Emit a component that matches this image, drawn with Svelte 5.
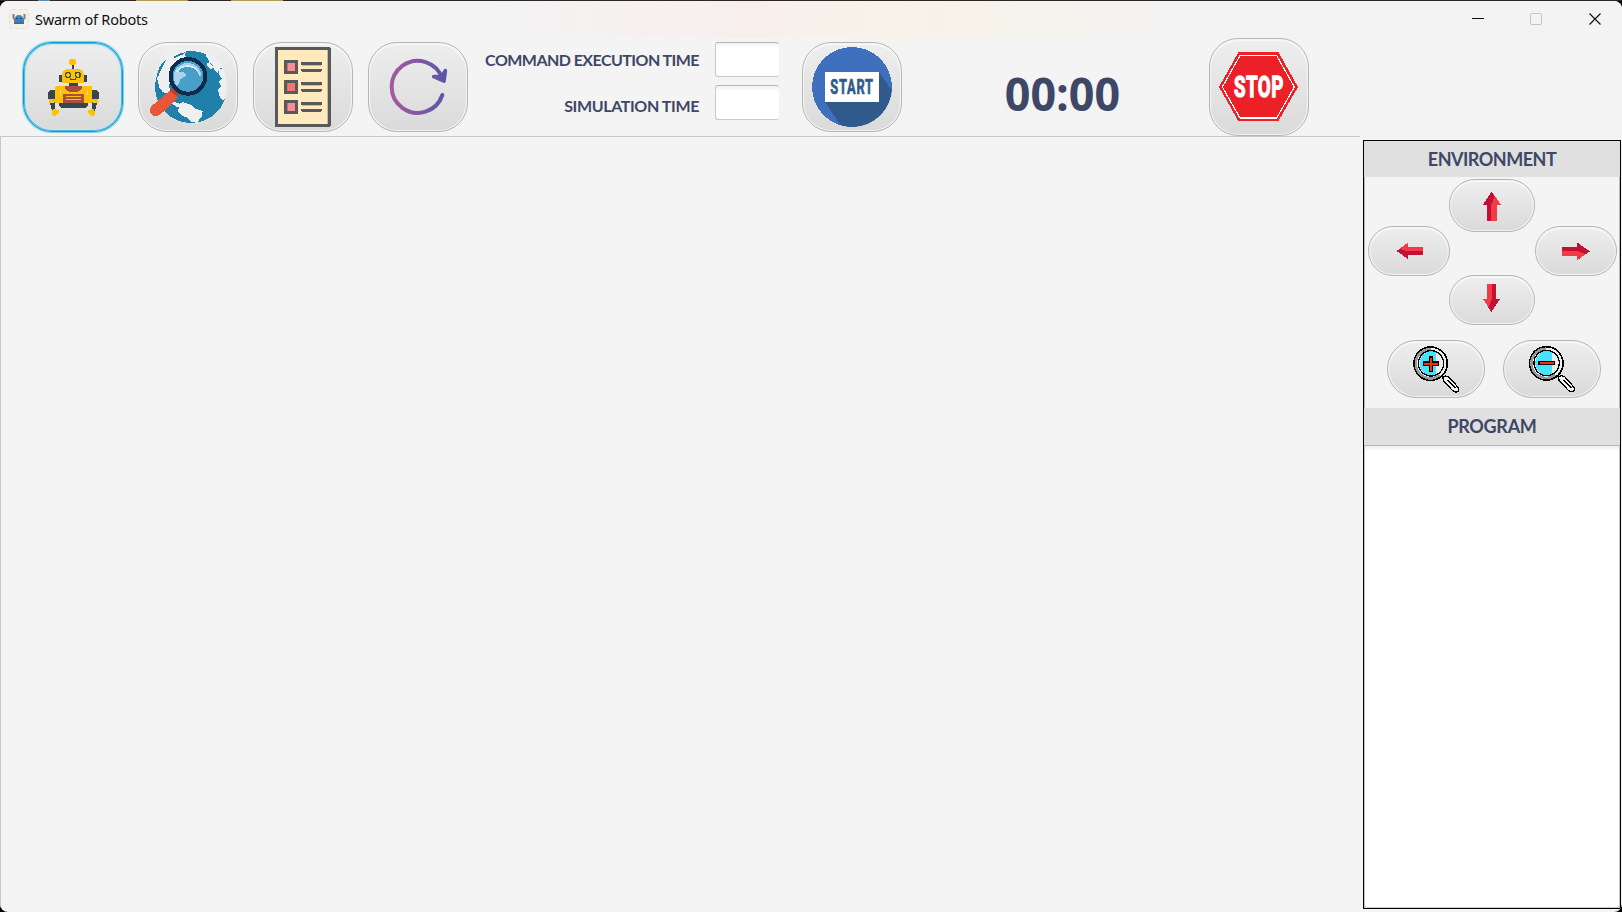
<script>
  let commandTime = $state('');
  let simulationTime = $state('');
  let clock = $state('00:00');
  const rows = [93, 153, 213];
</script>

<div class="desktop">
  <div class="strip"><i style="width:12px"></i><b></b><b></b></div>
  <main class="window">
    <header class="titlebar">
      <svg class="appicon" viewBox="0 0 20 20" width="20" height="20">
        <rect x=".5" y=".5" width="19" height="19" rx="3" fill="#f4efe7" stroke="#e5dfd7" stroke-dasharray="4 2" />
        <path d="M4.500 5v4l2 2M15.500 5v4l-2 2" fill="none" stroke="#8a7d7b" stroke-width="2" />
        <path d="M6 14V10q0-4 4-4t4 4v4z" fill="#3987c9" />
        <path d="M5 11h10v3H5z" fill="#3f78b5" />
        <path d="M7 9h2v1H7zm4 0h2v1h-2z" fill="#263858" />
        <path d="M5 14.500h10" stroke="#8f4b50" />
      </svg>
      <span class="title">Swarm of Robots</span>
      <div class="controls">
        <svg width="130" height="14" viewBox="0 0 130 14">
          <path d="M0 6.500h12" stroke="#111" />
          <rect x="58.500" y="1.500" width="11" height="11" rx="1" fill="none" stroke="#c4c4c4" />
          <path d="M117.500 1.500l11 11m0-11l-11 11" stroke="#111" stroke-width="1.200" />
        </svg>
      </div>
    </header>

    <div class="toolbar">
      <button class="tool focused" aria-label="Robots">
        <svg viewBox="24 18 300 270" shape-rendering="crispEdges">
          <circle cx="173" cy="78" r="10.500" fill="#ffc107" />
          <path d="M171 88h6v12h-6zM132 117h9v21h-9zM207 117h9v21h-9zM162 140h27v11h-27z" fill="#37474f" />
          <path d="M141 141v-21q0-21 21-21h24q21 0 21 21v21z" fill="#ffc107" />
          <g fill="none" stroke="#455044" stroke-width="4"><circle cx="159" cy="117" r="7.500" /><circle cx="188" cy="117" r="7.500" /></g>
          <path d="M165 126h3v3h12v-3h3v6h-18z" fill="#455044" />
          <path d="M99 189v-18q2-9 12-9h9v27zM252 189v-18q-2-9-12-9h-9v27zM105 201l15-2v22l-9 5zM246 201l-15-2v22l9 5zM132 201h87v8l-6 7h-75l-6-7z" fill="#37474f" />
          <path d="M120 201v-45q0-6 6-6h99q6 0 6 6v45z" fill="#ffc107" />
          <path d="M135 162v15M216 162v15" stroke="#ffe082" stroke-width="3" />
          <path d="M150 150h51v6q-4 11-16 11h-20q-12 0-15-11zM144 174h63v27h-63z" fill="#a6513b" />
          <path d="M153 182h45M153 191h45" stroke="#ffc107" stroke-width="3" />
          <path d="M102 189h18v9l-18 3zM231 189h18v12l-18-3zM117 218l15 6v6l-8 9-10 1-4-6v-8zM234 218l-15 6v6l8 9 10 1 3-6v-8z" fill="#ffc107" />
        </svg>
      </button>
      <button class="tool" aria-label="Explore environment">
        <svg viewBox="24 18 300 270" shape-rendering="crispEdges">
          <circle cx="183" cy="153" r="108" fill="#2080a9" />
          <path d="M168 42l-3 16 6 6-50 30-3 62 4 8-10 8-14-4-10-14-6-24 3-30 12-18-6-12 6-12 20-18 26-16z" fill="#efefef" />
          <path d="M81 118l6-22 12-18 8-5-14 28-9 22zM131 63l15-9 22-6-8 8-14 4-10 6z" fill="#2080a9" />
          <path d="M225 56l10 14 3 12 12 10 3 10 10 10 0-12 9-4 12 4-16-26-20-16zM232 82l12 0 8 12-8 6-12-10zM264 100l14-3 10 24 0 8-12 0-6-8zM284 120l8 20v28l-10 26-6-3-9-12-3-20 9-8-6-14 9-9z" fill="#efefef" />
          <path d="M126 192l12 8 9 3 0 9-9 0-12-10zM147 204l12-6 24 9 9 9 26 9-2 15-9 9-3 12-21-3-9-12-21-9-9-12 3-9z" fill="#efefef" />
          <path d="M118 166l14-14 19 17-13 15z" fill="#bd3f2d" />
          <path d="M119 165l25 19-50 49q-10 10-24 6-13-7-9-21 2-8 10-13z" fill="#e8573a" />
          <circle cx="174" cy="121" r="52" fill="#4a9fc9" stroke="#0d2c4b" stroke-width="12" />
          <path d="M132 123q-1-24 17-34 25-17 50 1 15 12 15 29l-5 3q-7-25-30-29-27-2-34 16 11-4 18 0l6 7-6 7-12 7-4 13-8 8q-6-10-7-28" fill="#a7d4eb" />
          <path d="M138 108q14-22 41-20 26 4 32 34-7-25-32-29-27-3-36 15z" fill="#d9effa" />
        </svg>
      </button>
      <button class="tool" aria-label="Command list">
        <svg viewBox="24 18 300 270" shape-rendering="crispEdges">
          <rect x="94" y="37" width="159" height="232" rx="2" fill="#ffeabd" stroke="#58595b" stroke-width="9" />
          <path d="M247.500 42v222" stroke="#cbbd9c" stroke-width="3" />
          {#each rows as y, i}
            <rect x="121.500" y={y - 16.500} width="33" height="33" fill={i === 1 ? '#f77373' : '#f78e91'} stroke="#58595b" stroke-width="9" />
            <path d="M127.500 {y - 12}v24" stroke="#cb7475" stroke-width="3" />
            <path d="M171 {y - 10}h57M171 {y + 10}h57" stroke="#58595b" stroke-width="8" stroke-linecap="round" />
            <path d="M171 {y - 4}h57" stroke="#cbbd9c" stroke-width="3" />
          {/each}
        </svg>
      </button>
      <button class="tool" aria-label="Reset">
        <svg viewBox="369 18 300 270">
          <defs><linearGradient id="sweep" gradientUnits="userSpaceOnUse" x1="435" y1="0" x2="605" y2="0"><stop offset="0" stop-color="#a65aa0" /><stop offset="1" stop-color="#5b55a6" /></linearGradient></defs>
          <path d="M592 177A78 78 0 1 1 592 128" fill="none" stroke="url(#sweep)" stroke-width="12" stroke-linecap="round" />
          <path d="M566 122l31 13 4-31-10 18z" fill="url(#sweep)" stroke="url(#sweep)" stroke-width="11" stroke-linejoin="round" />
        </svg>
      </button>

      <div class="times">
        <label for="command">COMMAND EXECUTION TIME</label>
        <input id="command" bind:value={commandTime} />
        <label for="simulation">SIMULATION TIME</label>
        <input id="simulation" bind:value={simulationTime} />
      </div>

      <button class="tool" aria-label="Start">
        <svg viewBox="36 18 300 270" shape-rendering="crispEdges">
          <defs><clipPath id="disc"><circle cx="186" cy="153" r="120" /></clipPath></defs>
          <circle cx="186" cy="153" r="120" fill="#3e70bd" />
          <path d="M267 108l70 100v80H165L105 198z" fill="#305a8b" clip-path="url(#disc)" />
          <path d="M105 108h162v90H105z" fill="#fff" />
          <g transform="translate(121 175) scale(.64 1)"><text textLength="200" font-size="60" fill="#305a8b" stroke="#305a8b" stroke-width="2">START</text></g>
        </svg>
      </button>
      <div class="clock"><span>{clock}</span></div>
      <button class="tool tall" aria-label="Stop">
        <svg viewBox="687 6 300 294" shape-rendering="crispEdges">
          <path d="M775 49l120-1 59 105-59 102H775l-58-102z" fill="#ec2027" />
          <path d="M780 58.500h110l53 94.500-53 93H780l-53-93z" fill="none" stroke="#fff" stroke-width="3.500" />
          <g transform="translate(762 184) scale(.64 1)"><text textLength="231" font-size="88" fill="#fff" stroke="#fff" stroke-width="4">STOP</text></g>
        </svg>
      </button>
    </div>

    <div class="body">
      <section class="field"></section>
      <aside>
        <h2 class="environment">ENVIRONMENT</h2>
        <div class="pad">
          <button class="up" aria-label="Up">
            <svg viewBox="282 147 258 159" shape-rendering="crispEdges">
              <path d="M384 224l26-39 28 39h-12v49h-30v-49z" fill="#f23a49" /><path d="M384 224l26-39 9 15-10 24v49h-13v-49z" fill="#c51036" />
            </svg>
          </button>
          <button class="left" aria-label="Left">
            <svg viewBox="39 288 246 150" shape-rendering="crispEdges">
              <path d="M125 363l34-25v13h45v24h-45v12z" fill="#f23a49" /><path d="M125 363l10-6 22 7h47v11h-45v12z" fill="#c51036" />
            </svg>
          </button>
          <button class="right" aria-label="Right">
            <svg viewBox="540 288 246 150" shape-rendering="crispEdges">
              <path d="M705 364l-38-26v13h-46v27h46v12z" fill="#c51036" /><path d="M621 364h46l26 8-26 18v-12h-46z" fill="#f23a49" />
            </svg>
          </button>
          <button class="down" aria-label="Down">
            <svg viewBox="282 435 258 150" shape-rendering="crispEdges">
              <path d="M384 507h12v-45h27v45h12l-26 39z" fill="#c51036" /><path d="M384 507h12v-45h14v47l-9 24z" fill="#f23a49" />
            </svg>
          </button>
        </div>
        <div class="zooms">
          {#each [true, false] as plus}
            <button aria-label={plus ? 'Zoom in' : 'Zoom out'}>
              <svg viewBox={plus ? '96 30 294 174' : '97 31 294 174'} shape-rendering="crispEdges">
                <path d="M264 141l8-3 10 3 29 33v9l-8 3-9-3-29-30z" fill="#f2f2f2" stroke="#000" stroke-width="4" />
                <path d="M278 150l24 25" stroke="#000" stroke-width="4" />
                <circle cx="227" cy="101" r="50" fill="#eee" stroke="#000" stroke-width="5" />
                <path d="M227 53a48 48 0 1 0 29 86l-5-7a40 40 0 1 1-24-71z" fill="#989898" />
                <circle cx="228" cy="100" r="37" fill="#ececec" />
                <path d="M243 65v70A37 37 0 1 1 243 65" fill="#46e3ff" />
                <circle cx="228" cy="100" r="38" fill="none" stroke="#000" stroke-width="4" />
                {#if plus}
                  <path d="M223 81h10v15h17v10h-17v19h-10v-19h-17V96h17z" fill="#ff2b05" stroke="#000" stroke-width="4" />
                {:else}
                  <path d="M205 95h46v10h-46z" fill="#ff2b05" stroke="#000" stroke-width="4" />
                {/if}
              </svg>
            </button>
          {/each}
        </div>
        <h2 class="program">PROGRAM</h2>
        <div class="listing"></div>
      </aside>
    </div>
  </main>
</div>

<style>
  :global(body) { margin: 0; overflow: hidden; background: #000; }
  * { box-sizing: border-box; }
  .desktop { width: 1622px; height: 912px; display: flex; flex-direction: column; background: #000; }
  .strip { flex: 0 0 1px; height: 1px; background: #2c2628; display: flex; gap: 43px; padding-left: 38px; }
  .strip i { background: #5b8db0; margin-right: 43px; }
  .strip b { width: 52px; background: #b59a55; }
  .window { flex: 1; border-radius: 8px; overflow: hidden; background: #f4f4f4; display: flex; flex-direction: column; }
  .titlebar { height: 37px; display: flex; align-items: center; padding: 0 20px 2px 9px; background: linear-gradient(90deg, #f3f3f3 30%, #f5f1f0 38%, #f8efed 46%, #f8f2e8 55%, #f5f3ec 64%, #f3f3f3 72%); }
  .appicon { margin-right: 6px; }
  .title { font: 14.500px 'Noto Sans', sans-serif; letter-spacing: -0.220px; color: #111; }
  .controls { margin-left: auto; height: 14px; }
  .controls svg { display: block; }
  .toolbar { height: 98px; flex: none; display: flex; align-items: center; gap: 15px; padding-left: 23px; }
  button { padding: 0; border: 1px solid #b5b5b5; border-radius: 26px; background: linear-gradient(#eee, #dadada); box-shadow: inset 0 0 0 1px #f3f3f3, inset 0 1px 1px 1px #fafafa; overflow: hidden; flex: none; }
  button svg { display: block; width: calc(100% + 2px); height: calc(100% + 2px); margin: -1px; }
  .tool { width: 100px; height: 90px; border-radius: 29px; }
  .tall { height: 98px; }
  .focused { border: 1px solid #039ed3; box-shadow: 0 0 1px 1px #7fcde8, inset 0 0 0 1px #4fb8dd, inset 0 0 2px 2px #cbe6f0; }
  .tool text { font-family: Roboto, sans-serif; font-weight: 700; }
  .times { width: 296px; height: 98px; display: grid; grid-template-columns: 216px 64px; grid-template-rows: 35px 35px; column-gap: 16px; row-gap: 8px; padding-top: 4px; }
  .times label { font: 700 16px/35px Lato, sans-serif; letter-spacing: -0.550px; color: #3f4766; text-align: right; white-space: nowrap; }
  .times label:nth-of-type(2) { padding-top: 3px; letter-spacing: -0.380px; }
  .times input { width: 64px; height: 35px; padding: 4px; border: solid; border-width: 1px 0 1px 1px; border-color: #b5b5b5 #c8c8c8 #c8c8c8; border-radius: 3px; background: linear-gradient(#f1f1f1, #fff 5px); outline: 0; }
  .times + .tool { margin-left: 8px; }
  .clock { width: 277px; display: flex; justify-content: center; padding: 12px 0 0 14px; }
  .clock span { font: 700 47px/60px 'Open Sans', sans-serif; color: #3f4766; transform: scaleX(.955); }
  .body { flex: 1; display: flex; min-height: 0; }
  .field { width: 1360px; border: solid #c8c8c8; border-width: 1px 0 0 1px; }
  aside { width: 258px; height: 769px; margin: 4px 0 0 3px; border: 1px solid #000; display: flex; flex-direction: column; box-shadow: inset 1px 0 #b8b8b8, inset -1px 0 #b8b8b8; }
  h2 { margin: 0; background: #e0e0e0; color: #3f4766; font: 700 18px Lato, sans-serif; text-align: center; flex: none; }
  .environment { height: 36px; line-height: 37px; letter-spacing: -0.500px; }
  .program { height: 38px; line-height: 37px; margin-top: 10px; letter-spacing: -0.300px; border-bottom: 1px solid #b5b5b5; }
  .pad { display: grid; grid-template-columns: 82px 85px 82px; grid-template-rows: 47px 49px 50px; padding: 2px 0 0 4px; }
  .pad button { width: 82px; height: 50px; }
  .pad .up { grid-area: 1 / 2; width: 86px; height: 53px; margin-left: -1px; }
  .pad .left { grid-area: 2 / 1; }
  .pad .right { grid-area: 2 / 3; }
  .pad .down { grid-area: 3 / 2; width: 86px; margin-left: -1px; }
  .zooms { display: flex; gap: 18px; padding: 15px 0 0 23px; }
  .zooms button { width: 98px; height: 58px; border-radius: 29px; }
  .listing { flex: 1; border: 1px solid #c8c8c8; border-top: 0; border-radius: 0 0 3px 3px; background: linear-gradient(#efefef, #fff 5px); }
</style>
